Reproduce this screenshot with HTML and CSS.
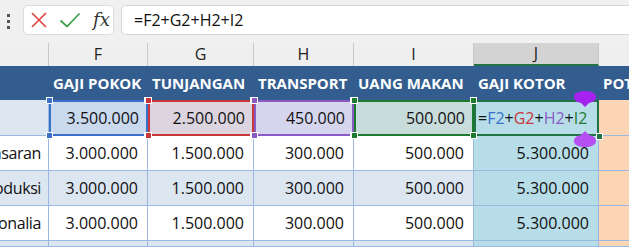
FILE: index.html
```html
<!DOCTYPE html>
<html lang="en">
	<head>
		<meta charset="UTF-8" />
		<title>Gaji Karyawan</title>
		<link rel="stylesheet" href="styles.css">
	</head>
	<body>
		<div class="toolbar">
			<div class="grip"><span></span><span></span><span></span></div>
			<div class="actions">
				<svg width="18" height="18" viewBox="0 0 18 18">
					<path d="M2 2L16 16M16 2L2 16" stroke="#e0413f" stroke-width="1.6" fill="none" />
				</svg>
				<svg width="22" height="18" viewBox="0 0 22 18">
					<path d="M1.5 9.5L8 15.5L20.5 2.5" stroke="#3fa24f" stroke-width="1.8" fill="none" />
				</svg>
				<span class="fx">fx</span>
			</div>
			<div class="formula">=F2+G2+H2+I2</div>
		</div>

		<div class="sheet">
			<!-- column letters -->
			<div class="col-head"></div>
			<div class="col-head">F</div>
			<div class="col-head">G</div>
			<div class="col-head">H</div>
			<div class="col-head">I</div>
			<div class="col-head active">J</div>
			<div class="col-head"></div>

			<!-- table header -->
			<div class="th"></div>
			<div class="th">GAJI POKOK</div>
			<div class="th">TUNJANGAN</div>
			<div class="th">TRANSPORT</div>
			<div class="th">UANG MAKAN</div>
			<div class="th">GAJI KOTOR</div>
			<div class="th">POT</div>

			<!-- row 2 (editing) -->
			<div class="cell band"></div>
			<div class="cell ref ref-blue">3.500.000<i class="h tl"></i><i class="h tr"></i><i class="h bl"></i><i class="h br"></i></div>
			<div class="cell ref ref-red">2.500.000<i class="h tl"></i><i class="h tr"></i><i class="h bl"></i><i class="h br"></i></div>
			<div class="cell ref ref-purple">450.000<i class="h tl"></i><i class="h tr"></i><i class="h bl"></i><i class="h br"></i></div>
			<div class="cell ref ref-green">500.000<i class="h tl"></i><i class="h tr"></i><i class="h bl"></i><i class="h br"></i></div>
			<div class="cell total editing">
				<span>=</span><span class="c-blue">F2</span><span>+</span><span class="c-red">G2</span><span>+</span><span class="c-purple">H2</span><span>+</span><span class="c-green">I2</span>
				<i class="fill-handle"></i>
				<svg class="drop drop-top" width="22" height="16" viewBox="0 0 22 16">
					<path d="M11 16L7 12C2 11 0 9 0 6C0 2 5 0 11 0C17 0 22 2 22 6C22 9 20 11 15 12Z" fill="#a622f1" />
				</svg>
				<svg class="drop drop-bottom" width="22" height="16" viewBox="0 0 22 16">
					<path d="M11 0L7 4C2 5 0 7 0 10C0 14 5 16 11 16C17 16 22 14 22 10C22 7 20 5 15 4Z" fill="#b64ff1" />
				</svg>
			</div>
			<div class="cell extra"></div>

			<!-- row 3 -->
			<div class="cell name">Pemasaran</div>
			<div class="cell">3.000.000</div>
			<div class="cell">1.500.000</div>
			<div class="cell">300.000</div>
			<div class="cell">500.000</div>
			<div class="cell total">5.300.000</div>
			<div class="cell extra"></div>

			<!-- row 4 -->
			<div class="cell name band">Produksi</div>
			<div class="cell band">3.000.000</div>
			<div class="cell band">1.500.000</div>
			<div class="cell band">300.000</div>
			<div class="cell band">500.000</div>
			<div class="cell total">5.300.000</div>
			<div class="cell extra"></div>

			<!-- row 5 -->
			<div class="cell name">Personalia</div>
			<div class="cell">3.000.000</div>
			<div class="cell">1.500.000</div>
			<div class="cell">300.000</div>
			<div class="cell">500.000</div>
			<div class="cell total">5.300.000</div>
			<div class="cell extra"></div>

			<!-- row 6, cut by the window -->
			<div class="cell band"></div>
			<div class="cell band"></div>
			<div class="cell band"></div>
			<div class="cell band"></div>
			<div class="cell band"></div>
			<div class="cell total"></div>
			<div class="cell extra"></div>
		</div>
	</body>
</html>
```

FILE: styles.css
```css
:root {
	--grid-line: #9bb8e1;
	--band: #dce6f1;
	--header: #335d8f;
	--total: #b7dee8;
	--extra: #fcd5b4;
	--blue: #3a70c8;
	--red: #c8363a;
	--purple: #8a5bc4;
	--green: #1d7b2f;
	--active: #217346;
}

* {
	box-sizing: border-box;
	margin: 0;
	padding: 0;
}

body {
	width: 629px;
	height: 247px;
	overflow: hidden;
	background: #fff;
	font-family: "Open Sans", "Liberation Sans", sans-serif;
	color: #111;
}

.toolbar {
	height: 43px;
	background: #f0f0f0;
	display: flex;
	align-items: flex-start;
	padding-top: 5px;
	gap: 7px;
}

.grip {
	width: 16px;
	display: flex;
	flex-direction: column;
	align-items: center;
	gap: 3px;
	padding-top: 9px;
}

.grip span {
	width: 3px;
	height: 3px;
	background: #555;
}

.actions {
	width: 91px;
	height: 30px;
	background: #fff;
	border: 1px solid #dcdcdc;
	border-radius: 5px;
	display: flex;
	align-items: center;
	padding-left: 6px;
	gap: 11px;
}

.fx {
	font-family: "DejaVu Serif", "Liberation Serif", serif;
	font-style: italic;
	font-size: 18px;
	color: #333;
	margin-left: 1px;
	margin-top: -2px;
}

.formula {
	flex: 1;
	height: 30px;
	background: #fff;
	border: 1px solid #d6d6d6;
	border-radius: 5px 0 0 5px;
	border-right: none;
	font-size: 16px;
	line-height: 28px;
	padding-left: 12px;
	color: #111;
}

.sheet {
	display: grid;
	grid-template-columns: 49px 99px 106px 100px 120px 125px 1fr;
	grid-template-rows: 23px 34px 36px 35px 35px 35px 6px;
}

.col-head {
	background: #efefef;
	border-right: 1px solid #c8c8c8;
	font-size: 16px;
	line-height: 23px;
	text-align: center;
	color: #222;
}

.col-head.active {
	background: #d3d3d3;
	border-bottom: 2px solid var(--active);
	line-height: 21px;
}

.th {
	background: var(--header);
	color: #fff;
	font-weight: 700;
	font-size: 15px;
	white-space: nowrap;
	display: flex;
	align-items: center;
	padding-left: 4px;
}

.cell {
	position: relative;
	border-right: 1px solid var(--grid-line);
	border-bottom: 1px solid var(--grid-line);
	display: flex;
	align-items: center;
	justify-content: flex-end;
	padding-right: 9px;
	font-size: 16px;
	white-space: nowrap;
}

.band {
	background: var(--band);
}

.cell.name {
	overflow: hidden;
	padding-right: 7px;
	letter-spacing: -0.4px;
}

.cell.total {
	background: var(--total);
}

.cell.extra {
	background: var(--extra);
}

/* formula reference boxes */
.ref {
	border-right: none;
	border-bottom: none;
}

.ref-blue {
	background: #c9d9ee;
	box-shadow: inset 0 0 0 2px var(--blue);
	--c: var(--blue);
}

.ref-red {
	background: #dcd5e0;
	box-shadow: inset 0 0 0 2px var(--red);
	--c: var(--red);
}

.ref-purple {
	background: #d5d6ee;
	box-shadow: inset 0 0 0 2px var(--purple);
	--c: var(--purple);
}

.ref-green {
	background: #c8dcdb;
	box-shadow: inset 0 0 0 2px var(--green);
	--c: var(--green);
}

.h {
	position: absolute;
	width: 7px;
	height: 7px;
	background: var(--c);
	border: 1px solid #fff;
	z-index: 2;
}

.h.tl { left: -3px; top: -3px; }
.h.tr { right: -3px; top: -3px; }
.h.bl { left: -3px; bottom: -3px; }
.h.br { right: -3px; bottom: -3px; }

.editing {
	justify-content: flex-start;
	padding-left: 4px;
	border-right: none;
	border-bottom: none;
	box-shadow: inset 0 0 0 2px var(--active);
}

.c-blue { color: var(--blue); }
.c-red { color: var(--red); }
.c-purple { color: var(--purple); }
.c-green { color: var(--green); }

.fill-handle {
	position: absolute;
	right: -4px;
	bottom: -4px;
	width: 7px;
	height: 7px;
	background: var(--active);
	border: 1px solid #fff;
	z-index: 3;
}

.drop {
	position: absolute;
	right: 3px;
	z-index: 4;
}

.drop-top {
	top: -9px;
}

.drop-bottom {
	bottom: -11px;
}
```
